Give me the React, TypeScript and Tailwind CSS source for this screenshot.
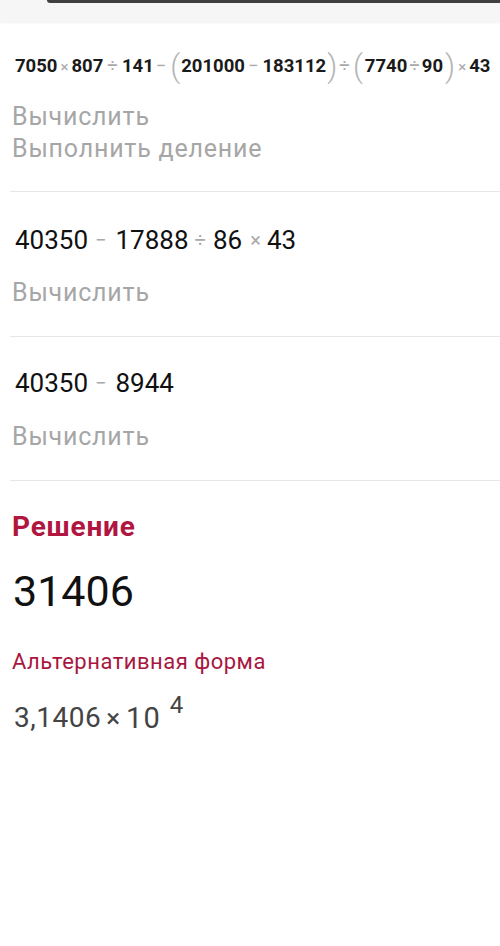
import React from "react";

const Op = ({ children, className = "" }: { children: React.ReactNode; className?: string }) => (
  <span className={`text-[#a9a9a9] font-normal ${className}`}>{children}</span>
);

const Paren = ({ children, className = "" }: { children: React.ReactNode; className?: string }) => (
  <span className={`text-[#b5b5b5] font-light text-[31px] leading-none relative top-[-1px] ${className}`}>{children}</span>
);

const Hint = ({ children }: { children: React.ReactNode }) => (
  <div className="text-[25px] leading-[32px] tracking-[0.8px] text-[#a6a6a6] pl-[2px]">{children}</div>
);

export default function App() {
  return (
    <div className="w-[500px] h-[946px] bg-white overflow-hidden" style={{ fontFamily: "Roboto, 'Noto Sans', sans-serif" }}>
      {/* status strip */}
      <div className="h-[22px] bg-[#f6f6f6] shadow-[0_1px_2px_rgba(0,0,0,0.06)] relative">
        <div className="absolute top-0 left-[47px] right-0 h-[3px] bg-[#404040] rounded-bl-[6px]" />
      </div>

      <div className="pl-[10px]">
        {/* step 1 */}
        <div className="pt-[30px] pb-[26px] border-b border-[#e6e6e6]">
          <div className="flex items-center h-[30px] pl-[5px] text-[18.5px] font-bold text-[#1a1a1a] whitespace-nowrap">
            <span>7050</span>
            <Op className="text-[15px] ml-[3px] mr-[3px]">×</Op>
            <span>807</span>
            <Op className="ml-[4px] mr-[4px]">÷</Op>
            <span>141</span>
            <Op className="ml-[2px] mr-[4px]">−</Op>
            <Paren>(</Paren>
            <span className="ml-[1px]">201000</span>
            <Op className="ml-[3px] mr-[4px]">−</Op>
            <span>183112</span>
            <Paren className="ml-[1px]">)</Paren>
            <Op className="ml-[2px] mr-[3px]">÷</Op>
            <Paren>(</Paren>
            <span className="ml-[2px]">7740</span>
            <Op className="ml-[2px] mr-[2px]">÷</Op>
            <span>90</span>
            <Paren className="ml-[2px]">)</Paren>
            <Op className="text-[15px] ml-[3px] mr-[3px]">×</Op>
            <span>43</span>
          </div>
          <div className="mt-[19px]">
            <Hint>Вычислить</Hint>
            <Hint>Выполнить деление</Hint>
          </div>
        </div>

        {/* step 2 */}
        <div className="pt-[31px] pb-[27px] border-b border-[#e6e6e6]">
          <div className="flex items-center h-[34px] pl-[5px] text-[26px] text-[#111] whitespace-nowrap">
            <span>40350</span>
            <Op className="text-[20px] ml-[7px] mr-[9px]">−</Op>
            <span>17888</span>
            <Op className="text-[20px] ml-[6px] mr-[7px]">÷</Op>
            <span>86</span>
            <Op className="text-[20px] ml-[8px] mr-[6px]">×</Op>
            <span>43</span>
          </div>
          <div className="mt-[20px]">
            <Hint>Вычислить</Hint>
          </div>
        </div>

        {/* step 3 */}
        <div className="pt-[29px] pb-[27px] border-b border-[#e6e6e6]">
          <div className="flex items-center h-[34px] pl-[5px] text-[26px] text-[#111] whitespace-nowrap">
            <span>40350</span>
            <Op className="text-[20px] ml-[7px] mr-[9px]">−</Op>
            <span>8944</span>
          </div>
          <div className="mt-[21px]">
            <Hint>Вычислить</Hint>
          </div>
        </div>

        {/* solution */}
        <div className="pt-[30px] pl-[2px] text-[28px] leading-[32px] tracking-[0.8px] font-bold text-[#b0163f]">Решение</div>
        <div className="mt-[23px] pl-[3px] text-[43px] leading-[50px] text-[#111]">31406</div>

        <div className="mt-[32px] pl-[2px] text-[22px] leading-[28px] tracking-[0.5px] text-[#a8173f]">Альтернативная форма</div>
        <div className="mt-[22px] h-[40px] flex items-start text-[#444] pl-[4px]">
          <span className="text-[28px] leading-[40px] tracking-[0.5px]">3,1406</span>
          <span className="text-[26px] leading-[40px] ml-[5px] mr-[6px]">×</span>
          <span className="text-[29px] leading-[40px] tracking-[1px]">10</span>
          <span className="text-[24px] leading-[24px] ml-[9px] -mt-[5px]">4</span>
        </div>
      </div>
    </div>
  );
}
